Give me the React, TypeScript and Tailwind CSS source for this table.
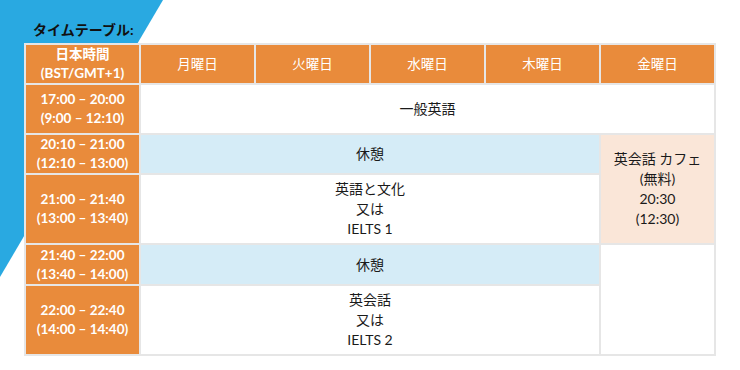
const body = "p-0 text-[14px] leading-[20px] text-[#1a1a1a]";
const timeCell =
  "border-2 border-[#e6e6e6] bg-[#e98b3b] p-0 text-center align-middle text-[13.5px] font-bold leading-[19px] text-white";
const dayCell =
  "border-2 border-[#e6e6e6] bg-[#e98b3b] p-0 text-center align-middle text-[13.5px] leading-[19px] text-white";

const days = ["月曜日", "火曜日", "水曜日", "木曜日", "金曜日"];

function Time({ a, b }: { a: string; b: string }) {
  return (
    <td className={timeCell}>
      <div>{a}</div>
      <div>{b}</div>
    </td>
  );
}

export default function App() {
  return (
    <div
      className="relative h-[370px] w-[740px] overflow-hidden bg-white"
      style={{ fontFamily: '"Lato", "Noto Sans CJK JP", sans-serif' }}
    >
      <svg className="absolute left-0 top-0" width="170" height="280" viewBox="0 0 170 280">
        <polygon points="0,0 163,0 0,277" fill="#29a9e1" />
      </svg>
      <div className="relative flex flex-col pl-6 pt-[17px]">
        <div className="pl-[9px] text-[14px] font-bold leading-[26px] text-[#111]">
          タイムテーブル:
        </div>
        <table className="w-[692px] table-fixed border-collapse border-2 border-[#e6e6e6] bg-white">
          <tbody>
            <tr className="h-[40px]">
              <td className={timeCell}>
                <div>日本時間</div>
                <div>(BST/GMT+1)</div>
              </td>
              {days.map((d) => (
                <td key={d} className={dayCell}>
                  {d}
                </td>
              ))}
            </tr>
            <tr className="h-[50px]">
              <Time a="17:00 – 20:00" b="(9:00 – 12:10)" />
              <td colSpan={5} className={`border-2 border-[#e6e6e6] text-center ${body}`}>
                一般英語
              </td>
            </tr>
            <tr className="h-[40px]">
              <Time a="20:10 – 21:00" b="(12:10 – 13:00)" />
              <td colSpan={4} className={`border-2 border-[#e6e6e6] bg-[#d5ecf7] text-center ${body}`}>
                休憩
              </td>
              <td rowSpan={2} className={`border-2 border-[#e6e6e6] bg-[#fae6d8] text-center ${body}`}>
                <div>英会話 カフェ</div>
                <div>(無料)</div>
                <div>20:30</div>
                <div>(12:30)</div>
              </td>
            </tr>
            <tr className="h-[70px]">
              <Time a="21:00 – 21:40" b="(13:00 – 13:40)" />
              <td colSpan={4} className={`border-2 border-[#e6e6e6] text-center ${body}`}>
                <div>英語と文化</div>
                <div>又は</div>
                <div>IELTS 1</div>
              </td>
            </tr>
            <tr className="h-[41px]">
              <Time a="21:40 – 22:00" b="(13:40 – 14:00)" />
              <td colSpan={4} className={`border-2 border-[#e6e6e6] bg-[#d5ecf7] text-center ${body}`}>
                休憩
              </td>
              <td rowSpan={2} className="border-2 border-[#e6e6e6] p-0" />
            </tr>
            <tr className="h-[70px]">
              <Time a="22:00 – 22:40" b="(14:00 – 14:40)" />
              <td colSpan={4} className={`border-2 border-[#e6e6e6] text-center ${body}`}>
                <div>英会話</div>
                <div>又は</div>
                <div>IELTS 2</div>
              </td>
            </tr>
          </tbody>
        </table>
      </div>
    </div>
  );
}
